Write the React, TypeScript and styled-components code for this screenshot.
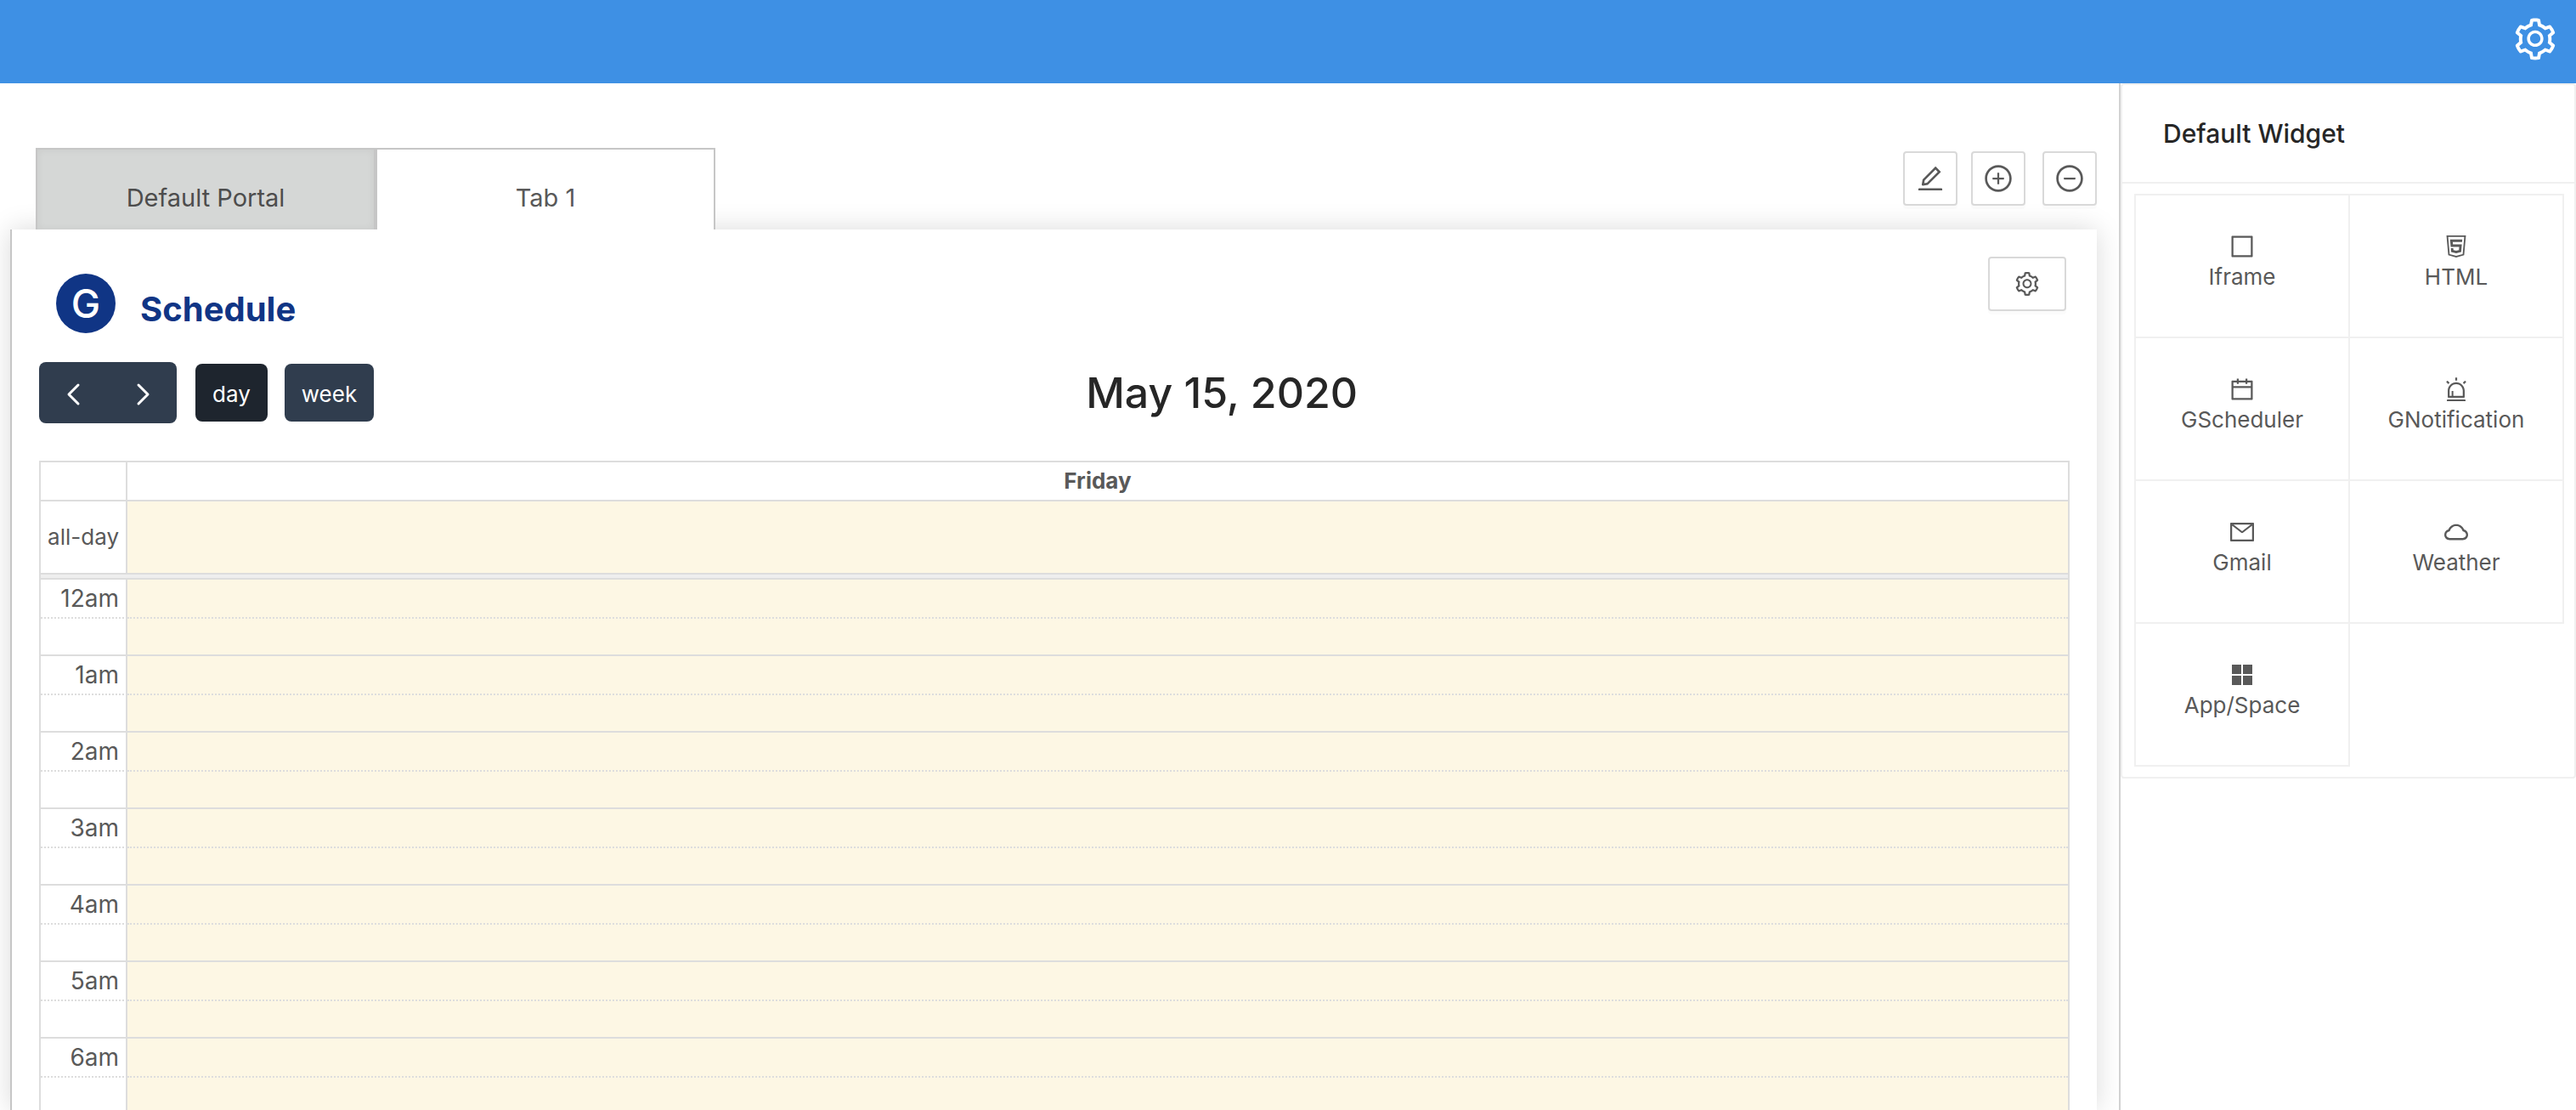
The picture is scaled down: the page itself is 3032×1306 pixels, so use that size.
import React from "react";
import styled, { createGlobalStyle, css } from "styled-components";
import {
  AiOutlineAlert,
  AiOutlineBorder,
  AiOutlineCalendar,
  AiOutlineCloud,
  AiOutlineEdit,
  AiOutlineHtml5,
  AiOutlineMail,
  AiOutlineMinusCircle,
  AiOutlinePlusCircle,
  AiOutlineSetting,
} from "react-icons/ai";

const color = {
  brand: "#3e90e4",
  navy: "#103585",
  text: "#595959",
  heading: "#262626",
  line: "#dddddd",
  soft: "#f0f0f0",
  frame: "#c6c6c6",
  today: "#fdf7e4",
  slate: "#303d4e",
  slateDark: "#1e252e",
};

const GlobalStyle = createGlobalStyle`
  *, *::before, *::after { box-sizing: border-box; }
  body {
    margin: 0;
    background: #fff;
    color: ${color.text};
    font-family: Inter, "Liberation Sans", sans-serif;
    font-size: 26px;
    line-height: 44px;
  }
  button { font: inherit; color: inherit; margin: 0; padding: 0; cursor: pointer; }
  svg { display: block; }
`;

const Page = styled.div`
  display: flex;
  flex-direction: column;
  height: 100vh;
  overflow: hidden;
`;

const TopBar = styled.header`
  flex: none;
  display: flex;
  justify-content: flex-end;
  height: 98px;
  padding: 18px 20px;
  background: ${color.brand};
`;

const TopBarButton = styled.button`
  display: flex;
  height: 56px;
  border: 0;
  background: none;
  color: #fff;
  font-size: 56px;
`;

const Body = styled.div`
  flex: 1;
  display: flex;
  min-height: 0;
`;

const Main = styled.main`
  flex: 1;
  display: flex;
  flex-direction: column;
  min-width: 0;
  padding: 76px 26px 0 12px;
`;

const TabRow = styled.div`
  flex: none;
  display: flex;
  justify-content: space-between;
  padding-left: 30px;
`;

const Tabs = styled.div`
  display: flex;
  position: relative;
  z-index: 1;
`;

const Tab = styled.button<{ $active?: boolean }>`
  width: 400px;
  height: 96px;
  padding-top: 20px;
  border: 2px solid ${color.frame};
  border-bottom: 0;
  background: #fff;
  font-size: 29px;
  ${(p) =>
    !p.$active &&
    css`
      background: #d5d7d6;
      color: #4d4d4d;
      box-shadow: inset 0 0 10px rgba(0, 0, 0, 0.06);
    `}
`;

const TabActions = styled.div`
  display: flex;
  gap: 16px;
  padding-top: 4px;
`;

const IconButton = styled.button<{ $wide?: boolean }>`
  flex: none;
  display: flex;
  align-items: center;
  justify-content: center;
  width: ${(p) => (p.$wide ? 92 : 64)}px;
  height: 64px;
  border: 2px solid #d9d9d9;
  border-radius: 4px;
  background: #fff;
  box-shadow: 0 4px 0 rgba(0, 0, 0, 0.016);
  font-size: ${(p) => (p.$wide ? 32 : 36)}px;
`;

const RemoveSlot = styled.div`
  padding-left: 4px;
`;

const Panel = styled.section`
  flex: 1;
  min-height: 0;
  padding: 32px 32px 0;
  border-left: 2px solid ${color.frame};
  background: #fff;
  box-shadow: 0 0 30px rgba(0, 0, 0, 0.15);
`;

const WidgetHeader = styled.div`
  display: flex;
  align-items: flex-start;
  justify-content: space-between;
  height: 124px;
  padding: 0 4px 0 20px;
`;

const WidgetTitle = styled.div`
  display: flex;
  gap: 29px;
  padding-top: 20px;
`;

const Avatar = styled.div`
  display: flex;
  align-items: center;
  justify-content: center;
  width: 70px;
  height: 70px;
  border-radius: 50%;
  background: ${color.navy};
  color: #fff;
  font-size: 46px;
  font-weight: 500;
`;

const WidgetName = styled.h2`
  margin: 0;
  padding-top: 20px;
  color: ${color.navy};
  font-size: 40px;
  font-weight: 700;
`;

const Toolbar = styled.div`
  display: flex;
  align-items: center;
  justify-content: space-between;
  margin-bottom: 44px;
`;

const ToolbarGroup = styled.div`
  display: flex;
  align-items: center;
  gap: 20px;
`;

const NavGroup = styled.div`
  display: flex;
  margin-right: 2px;
`;

const NavButton = styled.button`
  display: flex;
  align-items: center;
  justify-content: center;
  width: 81px;
  height: 72px;
  padding-top: 4px;
  border: 0;
  border-radius: 0 8px 8px 0;
  background: ${color.slate};
  color: #fff;
  &:first-child { border-radius: 8px 0 0 8px; }
`;

const ViewButton = styled.button<{ $active?: boolean }>`
  height: 68px;
  padding: 4px 20px 0;
  border: 0;
  border-radius: 8px;
  background: ${(p) => (p.$active ? color.slateDark : color.slate)};
  color: #fff;
`;

const DateTitle = styled.h2`
  margin: 0;
  color: ${color.heading};
  font-size: 50px;
  font-weight: 500;
  line-height: 72px;
`;

const Calendar = styled.table`
  width: 100%;
  table-layout: fixed;
  border: solid ${color.line};
  border-width: 0 2px;
  border-spacing: 0;
  th, td { padding: 0; border-top: 2px solid ${color.line}; }
`;

const AxisCol = styled.col`
  width: 102px;
`;

const Axis = styled.th<{ $minor?: boolean; $hour?: boolean }>`
  && {
    padding-right: 8px;
    border-right: 2px solid ${color.line};
    border-top-style: ${(p) => (p.$minor ? "dotted" : "solid")};
  }
  font-size: ${(p) => (p.$hour ? 28 : 26)}px;
  font-weight: 400;
  text-align: right;
  white-space: nowrap;
`;

const DayHeading = styled.th`
  height: 46px;
  font-weight: 700;
`;

const TodayCell = styled.td<{ $minor?: boolean; $tall?: boolean }>`
  && { border-top-style: ${(p) => (p.$minor ? "dotted" : "solid")}; }
  height: ${(p) => (p.$tall ? 86 : p.$minor ? 44 : 46)}px;
  background: ${color.today};
`;

const Divider = styled.td`
  height: 6px;
  background: #eeeeee;
  line-height: 0;
`;

const Sidebar = styled.aside`
  flex: none;
  width: 538px;
  border-left: 2px solid #d2d2d2;
  background: #fff;
  position: relative;
  z-index: 1;
`;

const Card = styled.section`
  border: 2px solid ${color.soft};
  border-radius: 4px;
`;

const CardTitle = styled.h3`
  margin: 0;
  padding: 35px 48px;
  border-bottom: 2px solid ${color.soft};
  color: ${color.heading};
  font-size: 30px;
  font-weight: 500;
`;

const WidgetGrid = styled.div`
  display: grid;
  grid-template-columns: 1fr 1fr;
  grid-auto-rows: 168px;
  margin: 12px 12px 12px 14px;
  padding: 0 2px 2px 0;
`;

const WidgetTile = styled.button`
  display: flex;
  flex-direction: column;
  align-items: center;
  margin: 0 -2px -2px 0;
  padding-top: 44px;
  border: 2px solid ${color.soft};
  background: none;
  line-height: 40px;
  svg { width: 32px; height: 32px; }
`;

function Chevron({ flip }: { flip?: boolean }) {
  return (
    <svg width="28" height="28" viewBox="0 0 28 28" fill="none" stroke="currentColor" strokeWidth="3" strokeLinecap="round" strokeLinejoin="round">
      <path d={flip ? "M9 3l11 11-11 11" : "M19 3L8 14l11 11"} />
    </svg>
  );
}

function AppGrid() {
  return (
    <svg viewBox="0 0 32 32" fill="currentColor">
      <path d="M4 4h11v11H4zM17 4h11v11H17zM4 17h11v11H4zM17 17h11v11H17z" />
    </svg>
  );
}

const widgets = [
  { name: "Iframe", icon: <AiOutlineBorder /> },
  { name: "HTML", icon: <AiOutlineHtml5 /> },
  { name: "GScheduler", icon: <AiOutlineCalendar /> },
  { name: "GNotification", icon: <AiOutlineAlert /> },
  { name: "Gmail", icon: <AiOutlineMail /> },
  { name: "Weather", icon: <AiOutlineCloud /> },
  { name: "App/Space", icon: <AppGrid /> },
];

const hours = ["12am", "1am", "2am", "3am", "4am", "5am", "6am"];

export default function App() {
  return (
    <Page>
      <GlobalStyle />
      <TopBar>
        <TopBarButton aria-label="Settings">
          <AiOutlineSetting />
        </TopBarButton>
      </TopBar>
      <Body>
        <Main>
          <TabRow>
            <Tabs>
              <Tab>Default Portal</Tab>
              <Tab $active>Tab 1</Tab>
            </Tabs>
            <TabActions>
              <IconButton aria-label="Edit tab"><AiOutlineEdit /></IconButton>
              <IconButton aria-label="Add tab"><AiOutlinePlusCircle /></IconButton>
              <RemoveSlot>
                <IconButton aria-label="Remove tab"><AiOutlineMinusCircle /></IconButton>
              </RemoveSlot>
            </TabActions>
          </TabRow>
          <Panel>
            <WidgetHeader>
              <WidgetTitle>
                <Avatar>G</Avatar>
                <WidgetName>Schedule</WidgetName>
              </WidgetTitle>
              <IconButton $wide aria-label="Widget settings"><AiOutlineSetting /></IconButton>
            </WidgetHeader>
            <Toolbar>
              <ToolbarGroup>
                <NavGroup>
                  <NavButton aria-label="Previous"><Chevron /></NavButton>
                  <NavButton aria-label="Next"><Chevron flip /></NavButton>
                </NavGroup>
                <ViewButton $active>day</ViewButton>
                <ViewButton>week</ViewButton>
              </ToolbarGroup>
              <DateTitle>May 15, 2020</DateTitle>
              <div />
            </Toolbar>
            <Calendar>
              <colgroup>
                <AxisCol />
                <col />
              </colgroup>
              <thead>
                <tr>
                  <Axis as="td" />
                  <DayHeading scope="col">Friday</DayHeading>
                </tr>
              </thead>
              <tbody>
                <tr>
                  <Axis scope="row">all-day</Axis>
                  <TodayCell $tall />
                </tr>
                <tr>
                  <Divider colSpan={2} />
                </tr>
                {hours.map((hour) => (
                  <React.Fragment key={hour}>
                    <tr>
                      <Axis scope="row" $hour>{hour}</Axis>
                      <TodayCell />
                    </tr>
                    <tr>
                      <Axis as="td" $minor />
                      <TodayCell $minor />
                    </tr>
                  </React.Fragment>
                ))}
              </tbody>
            </Calendar>
          </Panel>
        </Main>
        <Sidebar>
          <Card>
            <CardTitle>Default Widget</CardTitle>
            <WidgetGrid>
              {widgets.map((w) => (
                <WidgetTile key={w.name}>
                  {w.icon}
                  {w.name}
                </WidgetTile>
              ))}
            </WidgetGrid>
          </Card>
        </Sidebar>
      </Body>
    </Page>
  );
}
